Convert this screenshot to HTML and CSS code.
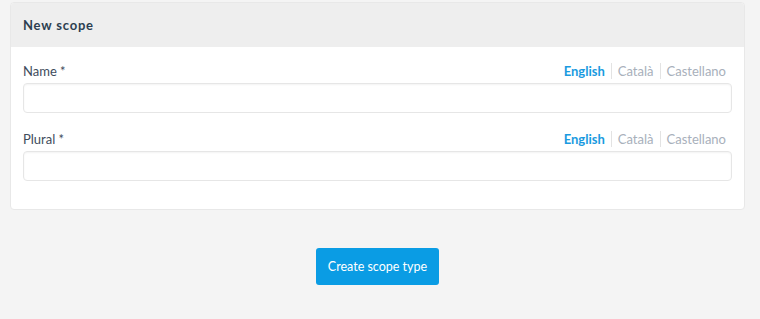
FILE: index.html
```html
<!DOCTYPE html>
<html lang="en">
<head>
    <meta charset="UTF-8">
    <meta name="viewport" content="width=device-width, initial-scale=1.0">
    <title>New scope</title>
    <link rel="stylesheet" href="styles.css">
</head>
<body>
    <div class="page">
        <div class="card">
            <div class="card-header">
                <h2 class="card-title">New scope</h2>
            </div>
            <div class="card-body">
                <div class="field">
                    <div class="field-top">
                        <label class="field-label">Name *</label>
                        <ul class="tabs">
                            <li class="tab active">English</li>
                            <li class="tab">Català</li>
                            <li class="tab">Castellano</li>
                        </ul>
                    </div>
                    <input class="input" type="text">
                </div>
                <div class="field">
                    <div class="field-top">
                        <label class="field-label">Plural *</label>
                        <ul class="tabs">
                            <li class="tab active">English</li>
                            <li class="tab">Català</li>
                            <li class="tab">Castellano</li>
                        </ul>
                    </div>
                    <input class="input" type="text">
                </div>
            </div>
        </div>
        <div class="actions">
            <button class="button" type="button">Create scope type</button>
        </div>
    </div>
</body>
</html>
```

FILE: styles.css
```css
body {
    font-family: Lato, 'Open Sans', sans-serif;
    margin: 0;
    padding: 0;
    background-color: #f4f4f4;
    color: #3e4c5c;
}
.page {
    padding: 2px 15px 0 10px;
}
.card {
    background: white;
    border: 1px solid #e8e8e8;
    border-radius: 4px;
    overflow: hidden;
}
.card-header {
    background-color: #eeeeee;
    height: 44px;
    display: flex;
    align-items: center;
    padding: 0 12px;
}
.card-title {
    margin: 0;
    font-size: 13px;
    font-weight: 700;
    letter-spacing: 0.8px;
    color: #2c3e50;
}
.card-body {
    padding: 16px 12px 10px;
}
.field {
    margin-bottom: 18px;
}
.field-top {
    display: flex;
    justify-content: space-between;
    align-items: center;
    height: 16px;
    line-height: 16px;
}
.field-label {
    font-size: 13px;
    color: #3e4c5c;
}
.tabs {
    list-style: none;
    margin: 0 6px 0 0;
    padding: 0;
    display: flex;
}
.tab {
    font-size: 13px;
    color: #a8b0bb;
    padding: 0 6px;
    border-left: 1px solid #e3e3e3;
    line-height: 16px;
}
.tab:first-child {
    border-left: none;
}
.tab.active {
    color: #1a9ae0;
    font-weight: 700;
}
.tab:last-child {
    padding-right: 0;
}
.input {
    display: block;
    box-sizing: border-box;
    width: 100%;
    height: 30px;
    margin-top: 4px;
    border: 1px solid #e6e6e6;
    border-radius: 4px;
    background: white;
    box-shadow: inset 0 1px 2px rgba(0, 0, 0, 0.05);
}
.actions {
    display: flex;
    justify-content: center;
    padding-top: 38px;
}
.button {
    background-color: #0a9ce4;
    color: white;
    border: none;
    border-radius: 3px;
    font-family: inherit;
    font-size: 12.5px;
    width: 123px;
    height: 37px;
}
```
